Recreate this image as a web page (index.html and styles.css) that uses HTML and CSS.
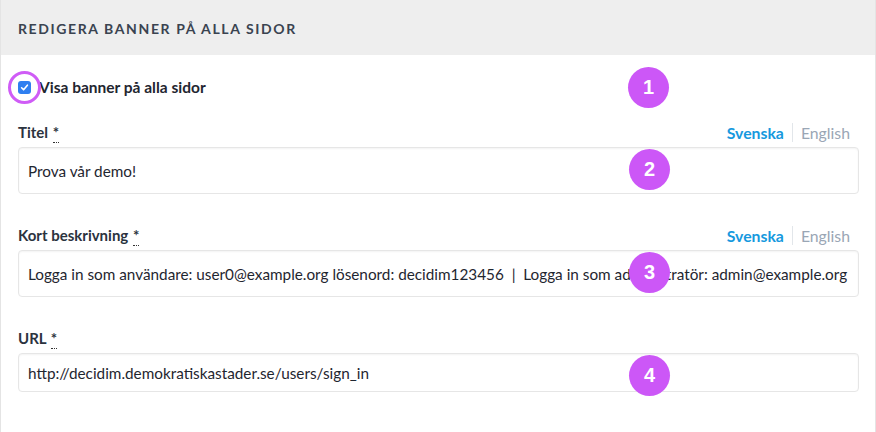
FILE: index.html
```html
<!DOCTYPE html>
<html lang="sv">
<head>
<meta charset="utf-8">
<link rel="stylesheet" href="styles.css">
</head>
<body>
<div class="card">
  <div class="card-header">
    <h2 class="card-title">REDIGERA BANNER PÅ ALLA SIDOR</h2>
  </div>
  <div class="card-body">
    <div class="check-row">
      <span class="check-wrap">
        <span class="checkbox"><svg width="9" height="9" viewBox="0 0 9 9"><path d="M1.6 4.8 L3.6 6.8 L7.4 2.2" fill="none" stroke="#fff" stroke-width="1.6" stroke-linecap="round" stroke-linejoin="round"/></svg></span>
        <span class="ring"></span>
      </span>
      <span class="check-label">Visa banner på alla sidor</span>
      <span class="badge">1</span>
    </div>

    <div class="field">
      <div class="label-row">
        <span class="label">Titel <abbr class="req">*</abbr></span>
        <span class="tabs"><span class="tab active">Svenska</span><span class="tab">English</span></span>
      </div>
      <div class="input tall"><span class="value">Prova vår demo!</span><span class="badge">2</span></div>
    </div>

    <div class="field">
      <div class="label-row">
        <span class="label">Kort beskrivning <abbr class="req">*</abbr></span>
        <span class="tabs"><span class="tab active">Svenska</span><span class="tab">English</span></span>
      </div>
      <div class="input tall"><span class="value">Logga in som användare: user0@example.org lösenord: decidim123456 &nbsp;|&nbsp; Logga in som administratör: admin@example.org</span><span class="badge">3</span></div>
    </div>

    <div class="field">
      <div class="label-row">
        <span class="label">URL <abbr class="req">*</abbr></span>
      </div>
      <div class="input short"><span class="value">http://decidim.demokratiskastader.se/users/sign_in</span><span class="badge">4</span></div>
    </div>
  </div>
</div>
</body>
</html>
```
FILE: styles.css
```css
* { box-sizing: border-box; }
html, body { margin: 0; padding: 0; background: #fff; }
body {
  font-family: "Lato", "Open Sans", sans-serif;
  color: #1f2630;
  width: 876px;
  height: 432px;
  overflow: hidden;
}
.card {
  width: 876px;
  height: 460px;
  border-left: 1px solid #e4e4e4;
  border-right: 1px solid #e4e4e4;
}
.card-header {
  height: 55px;
  background: #eeeeee;
  display: flex;
  align-items: center;
  padding-left: 17px;
}
.card-title {
  margin: 0;
  font-size: 14px;
  font-weight: 700;
  letter-spacing: 1.6px;
  color: #3a4350;
  padding-top: 2px;
}
.card-body {
  padding: 20px 16px 0 17px;
  position: relative;
}
.check-row {
  height: 24px;
  display: flex;
  align-items: center;
  position: relative;
}
.check-wrap {
  position: relative;
  width: 13px;
  height: 13px;
  margin-right: 8px;
}
.checkbox {
  display: flex;
  align-items: center;
  justify-content: center;
  width: 13px;
  height: 13px;
  background: #2f7ff0;
  border-radius: 3px;
}
.ring {
  position: absolute;
  left: -10px;
  top: -10px;
  width: 33px;
  height: 33px;
  border: 3px solid #cf5cf6;
  border-radius: 50%;
}
.check-label {
  font-size: 15.5px;
  font-weight: 700;
  color: #1f2630;
}
.badge {
  position: absolute;
  left: 610px;
  width: 41px;
  height: 41px;
  border-radius: 50%;
  background: #cc57f7;
  color: #fff;
  font-family: "Liberation Sans", sans-serif;
  font-weight: 700;
  font-size: 20px;
  display: flex;
  align-items: center;
  justify-content: center;
  z-index: 2;
}
.check-row .badge { top: -8px; }
.field { margin-top: 23px; }
.field + .field { margin-top: 31px; }
.label-row {
  height: 20px;
  display: flex;
  align-items: center;
  justify-content: space-between;
  margin-bottom: 5px;
}
.label {
  font-size: 15px;
  font-weight: 700;
  color: #2b333e;
}
.req {
  text-decoration: none;
  border-bottom: 1px dotted #333;
  padding-bottom: 1px;
  margin-left: 1px;
}
.tabs {
  display: flex;
  align-items: center;
  font-size: 15.8px;
  margin-right: 9px;
}
.tab {
  color: #9aa6b5;
  padding-left: 8px;
}
.tab.active {
  color: #1699de;
  font-weight: 700;
  padding-left: 0;
  padding-right: 8px;
  border-right: 1px solid #e2e6ea;
}
.input {
  position: relative;
  border: 1px solid #e6e6e6;
  border-radius: 4px;
  box-shadow: inset 0 1px 2px rgba(0,0,0,0.05);
  display: flex;
  align-items: center;
  padding-left: 9px;
  font-size: 15.3px;
  color: #1f2630;
  white-space: nowrap;
}
.input.tall { height: 47px; }
.input.short { height: 39px; }
.input .badge { top: 50%; left: 610px; }
.input.tall .badge { margin-top: -22px; }
.input.short .badge { margin-top: -18px; }
```
